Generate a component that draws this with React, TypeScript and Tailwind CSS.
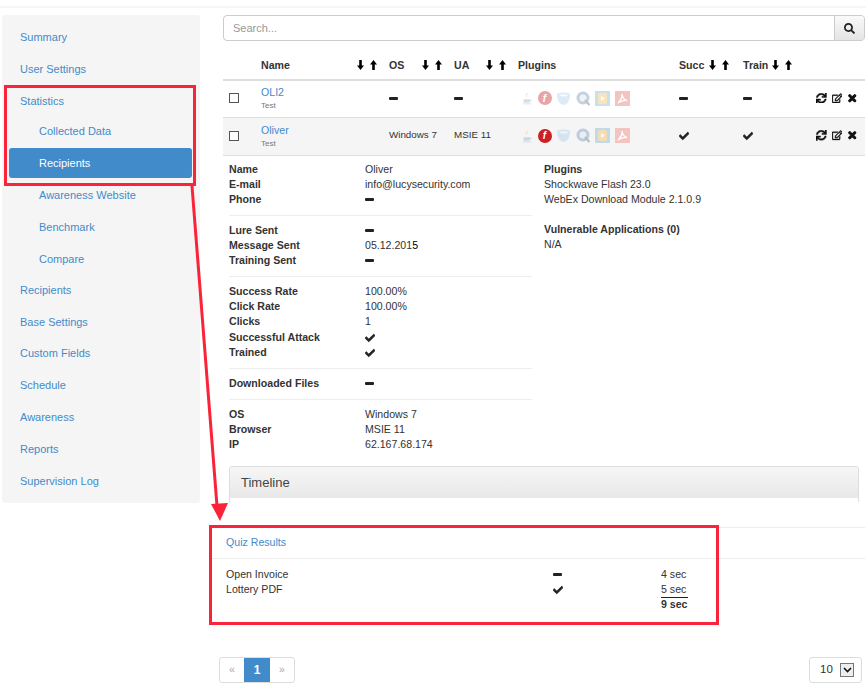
import React from "react";
import { FaSearch, FaCheck, FaSync, FaRegEdit, FaTimes } from "react-icons/fa";

const nav: [string, boolean, string][] = [
  ["Summary", false, ""], ["User Settings", false, ""], ["Statistics", false, ""],
  ["Collected Data", true, "-mt-[2px]"], ["Recipients", true, ""], ["Awareness Website", true, ""], ["Benchmark", true, ""], ["Compare", true, ""],
  ["Recipients", false, "-mt-[1px]"], ["Base Settings", false, ""], ["Custom Fields", false, "-mt-[0.5px]"], ["Schedule", false, "-mt-[0.5px]"], ["Awareness", false, ""], ["Reports", false, ""], ["Supervision Log", false, ""],
];

function Arrows() {
  return (
    <span className="inline-flex items-center gap-[6px]">
      <svg width="7" height="10" viewBox="0 0 7 10" fill="#000"><path d="M2.200 0h2.600v5.500H7L3.500 10 0 5.500h2.200z" /></svg>
      <svg width="7" height="10" viewBox="0 0 7 10" fill="#000"><path d="M2.200 10h2.600V4.500H7L3.500 0 0 4.500h2.200z" /></svg>
    </span>
  );
}

function Dash() {
  return <span className="block h-[3px] w-[9px] rounded-[1px] bg-[#222]" />;
}
function Check() {
  return <FaCheck className="stroke-[#222] stroke-[40] text-[10px] text-[#222]" />;
}

function Plugins({ flashOn }: { flashOn: boolean }) {
  return (
    <div className="flex items-center gap-[4.500px]">
      <svg width="11" height="16" viewBox="0 0 14 17" className="opacity-25">
        <path d="M8 1c1 2-3 3-2 5 .5 1 1 1.500 1 2-1-1-3-2-2-4C6 3 8 2 8 1z" fill="#e76f00" />
        <path d="M2 10h8v2.500c0 1.500-1 2-2 2H4c-1 0-2-.5-2-2zM10 10.500h2v2h-2z" fill="#5382a1" />
        <path d="M1 15.500h11v1H1z" fill="#5382a1" />
      </svg>
      <span className={`flex h-[14px] w-[14px] items-center justify-center rounded-full bg-[#cc1f26] text-[10px] font-bold italic text-white ${flashOn ? "" : "opacity-40"}`}>f</span>
      <svg width="15" height="15" viewBox="0 0 15 15" className="opacity-30">
        <path d="M1 3c3-2 10-2 13 0 0 6-2 10-6.500 11C3 13 1 9 1 3z" fill="#8fc0ea" />
        <path d="M3 4c3-1 6-1 9 0-1 2-7 2-9 0z" fill="#eaf4fc" />
      </svg>
      <svg width="15" height="15" viewBox="0 0 15 15" className="opacity-40">
        <circle cx="7" cy="7" r="6.500" fill="#6d8fb3" />
        <circle cx="7" cy="7" r="3.500" fill="#d5e6f5" />
        <path d="M9 9l4.500 5" stroke="#666" strokeWidth="2" />
      </svg>
      <svg width="15" height="15" viewBox="0 0 15 15" className="opacity-30">
        <rect width="15" height="15" fill="#4b9fc4" />
        <rect x="3" y="2" width="9" height="11" rx="2" fill="#f5a623" />
        <path d="M6 5l4 2.500L6 10z" fill="#fff" />
      </svg>
      <span className="flex h-[15px] w-[15px] items-center justify-center bg-[#f4c4c0]">
        <svg width="11" height="11" viewBox="0 0 11 11" fill="none" stroke="#fff" strokeWidth="1.300">
          <path d="M5 1c.5 3-1.500 6.500-4 9 2.500-2 6-3 9-2.500C7.500 7 5.500 4 5 1z" />
        </svg>
      </span>
    </div>
  );
}

function Actions() {
  return (
    <div className="flex items-center gap-[5px] text-[10.500px] text-[#111]">
      <FaSync className="stroke-[#111] stroke-[20]" />
      <FaRegEdit className="stroke-[#111] stroke-[20]" />
      <FaTimes className="stroke-[#111] stroke-[50]" />
    </div>
  );
}

function Box() {
  return <span className="block h-[10px] w-[10px] border border-[#555] bg-white" />;
}

function Row({ name, os, ua, flashOn, mark, shaded }: { name: string; os: React.ReactNode; ua: React.ReactNode; flashOn: boolean; mark: React.ReactNode; shaded: boolean }) {
  return (
    <div className={`flex items-center border-b border-[#ddd] pb-[2px] ${shaded ? "h-[38px] bg-[#f5f5f5]" : "h-[37px]"}`}>
      <div className="w-[38px] pl-[6px]"><Box /></div>
      <div className="w-[128px] pt-[2px]">
        <div className="leading-[13px] text-[#428bca]">{name}</div>
        <div className="text-[8px] leading-[13px] text-[#777]">Test</div>
      </div>
      <div className="w-[65px] text-[9.800px]">{os}</div>
      <div className="w-[64px] text-[9.800px]">{ua}</div>
      <div className="w-[161px] pl-[4px]"><Plugins flashOn={flashOn} /></div>
      <div className="w-[64px]">{mark}</div>
      <div className="w-[73px]">{mark}</div>
      <Actions />
    </div>
  );
}

function Details({ rows, last, step }: { rows: [string, React.ReactNode][]; last?: boolean; step?: boolean }) {
  return (
    <div className={`${last ? "" : "mb-[7px] border-b border-[#eee] pb-[8px]"} ${step ? "[&>*:nth-child(4)]:mt-[1px]" : ""}`}>
      {rows.map(([k, v]) => (
        <div key={k} className="grid h-[15px] grid-cols-[136px_1fr] items-center leading-[15px]">
          <span className="font-bold text-[#333]">{k}</span>
          <span className="text-[#333]">{v}</span>
        </div>
      ))}
    </div>
  );
}

export default function App() {
  return (
    <div className="relative h-[689px] w-[866px] overflow-hidden bg-white pt-[6px] text-[10.600px] text-[#333] [font-family:'Liberation_Sans',Arial,sans-serif]">
      <div className="h-[2px] bg-[#f6f6f6]" />
      <div className="mt-[7px] flex">
        <aside className="ml-[2px] h-[488px] w-[198px] rounded-[3px] bg-[#f5f5f5] pt-[6px] text-[11px] text-[#428bca]">
          {nav.map(([label, sub, shift], i) => {
            const active = label === "Recipients" && sub;
            return (
              <div key={i} className={`flex h-[32px] items-center ${shift}`}>
                {active ? (
                  <div className="ml-[7px] flex h-[30px] w-[183px] items-center rounded-[3px] bg-[#428bca] pl-[30px] text-white">{label}</div>
                ) : (
                  <span className={sub ? "pl-[37px]" : "pl-[18px]"}>{label}</span>
                )}
              </div>
            );
          })}
        </aside>

        <main className="ml-[23px] w-[642px]">
          <div className="flex h-[26px] overflow-hidden rounded-[4px] border border-[#ccc]">
            <div className="flex flex-1 items-center pl-[9px] text-[11px] text-[#999]">Search...</div>
            <div className="flex w-[30px] items-center justify-center border-l border-[#ccc] bg-gradient-to-b from-[#fafafa] to-[#e4e4e4] text-[11px] text-[#222]">
              <FaSearch />
            </div>
          </div>

          <div className="mt-[10px] flex h-[30px] items-center border-b-2 border-[#ddd] pt-[1px] font-bold">
            <div className="w-[38px]" />
            <div className="flex w-[128px] items-center justify-between pr-[12px]"><span>Name</span><Arrows /></div>
            <div className="flex w-[65px] items-center justify-between pr-[12px]"><span>OS</span><Arrows /></div>
            <div className="flex w-[64px] items-center justify-between pr-[12px]"><span>UA</span><Arrows /></div>
            <div className="w-[161px]">Plugins</div>
            <div className="flex w-[64px] items-center gap-[5px]"><span>Succ</span><Arrows /></div>
            <div className="flex w-[73px] items-center gap-[4px]"><span>Train</span><Arrows /></div>
          </div>

          <Row name="OLI2" os={<Dash />} ua={<Dash />} flashOn={false} mark={<Dash />} shaded={false} />
          <Row name="Oliver" os="Windows 7" ua="MSIE 11" flashOn mark={<Check />} shaded />

          <div className="flex pt-[6px] pl-[6px]">
            <div className="w-[303px]">
              <Details rows={[["Name", "Oliver"], ["E-mail", "info@lucysecurity.com"], ["Phone", <Dash />]]} />
              <Details rows={[["Lure Sent", <Dash />], ["Message Sent", <>05.12.201<span className="text-black">5</span></>], ["Training Sent", <Dash />]]} />
              <Details step rows={[["Success Rate", "100.00%"], ["Click Rate", "100.00%"], ["Clicks", "1"], ["Successful Attack", <Check />], ["Trained", <Check />]]} />
              <Details rows={[["Downloaded Files", <Dash />]]} />
              <Details last rows={[["OS", "Windows 7"], ["Browser", "MSIE 11"], ["IP", "62.167.68.174"]]} />
            </div>
            <div className="ml-[12px] leading-[15px]">
              <div className="font-bold">Plugins</div>
              <div>Shockwave Flash 23.0</div>
              <div>WebEx Download Module 2.1.0.9</div>
              <div className="mt-[15px] font-bold">Vulnerable Applications (0)</div>
              <div>N/A</div>
            </div>
          </div>

          <div className="mt-[14px] ml-[6px] h-[36px] w-[630px] rounded-t-[4px] border-x border-t border-[#ddd]">
            <div className="flex h-[31px] items-center rounded-t-[4px] bg-gradient-to-b from-[#f6f6f6] to-[#e8e8e8] pl-[11px] text-[13px] text-[#444]">Timeline</div>
          </div>

          <div className="-ml-[13px] mt-[25px] w-[655px]">
            <div className="flex h-[31px] items-center border-t border-[#eee] pl-[16px] text-[#428bca]">Quiz Results</div>
            <div className="border-t border-[#eee] pt-[8px] pl-[16px]">
              <div className="flex h-[15px] items-center"><span className="w-[327px]">Open Invoice</span><span className="w-[108px]"><Dash /></span><span>4 sec</span></div>
              <div className="flex h-[15px] items-center"><span className="w-[327px]">Lottery PDF</span><span className="w-[108px]"><Check /></span><span>5 sec</span></div>
              <div className="ml-[435px] flex h-[15px] w-[27px] items-center border-t border-[#222] font-bold">9 sec</div>
            </div>
          </div>

          <div className="-ml-[4px] mt-[45px] flex items-start justify-between pr-[3px]">
            <div className="flex h-[26px] overflow-hidden rounded-[3px] border border-[#ddd] text-[#aaa]">
              <span className="flex w-[24px] items-center justify-center">«</span>
              <span className="flex w-[26px] items-center justify-center bg-[#428bca] text-[12px] font-bold text-white">1</span>
              <span className="flex w-[24px] items-center justify-center">»</span>
            </div>
            <div className="flex h-[26px] w-[53px] items-center rounded-[3px] border border-[#ddd] pl-[10px] text-[11.500px]">
              <span className="w-[20px]">10</span>
              <span className="flex h-[14px] w-[14px] items-center justify-center border border-[#777] bg-[#eee]">
                <svg width="9" height="6" viewBox="0 0 9 6" fill="none" stroke="#111" strokeWidth="1.600"><path d="M1 1l3.500 3.500L8 1" /></svg>
              </span>
            </div>
          </div>
        </main>
      </div>

      <svg className="pointer-events-none absolute left-0 top-0" width="866" height="689" viewBox="0 0 866 689" fill="none">
        <rect x="5.500" y="86.500" width="189" height="98" stroke="#fb2339" strokeWidth="3" />
        <rect x="210.500" y="526.500" width="507" height="97" stroke="#fb2339" strokeWidth="3" />
        <path d="M192 186L217 506" stroke="#fb2339" strokeWidth="3" />
        <path d="M211 504L228 503L220 521z" fill="#fb2339" />
      </svg>
    </div>
  );
}
